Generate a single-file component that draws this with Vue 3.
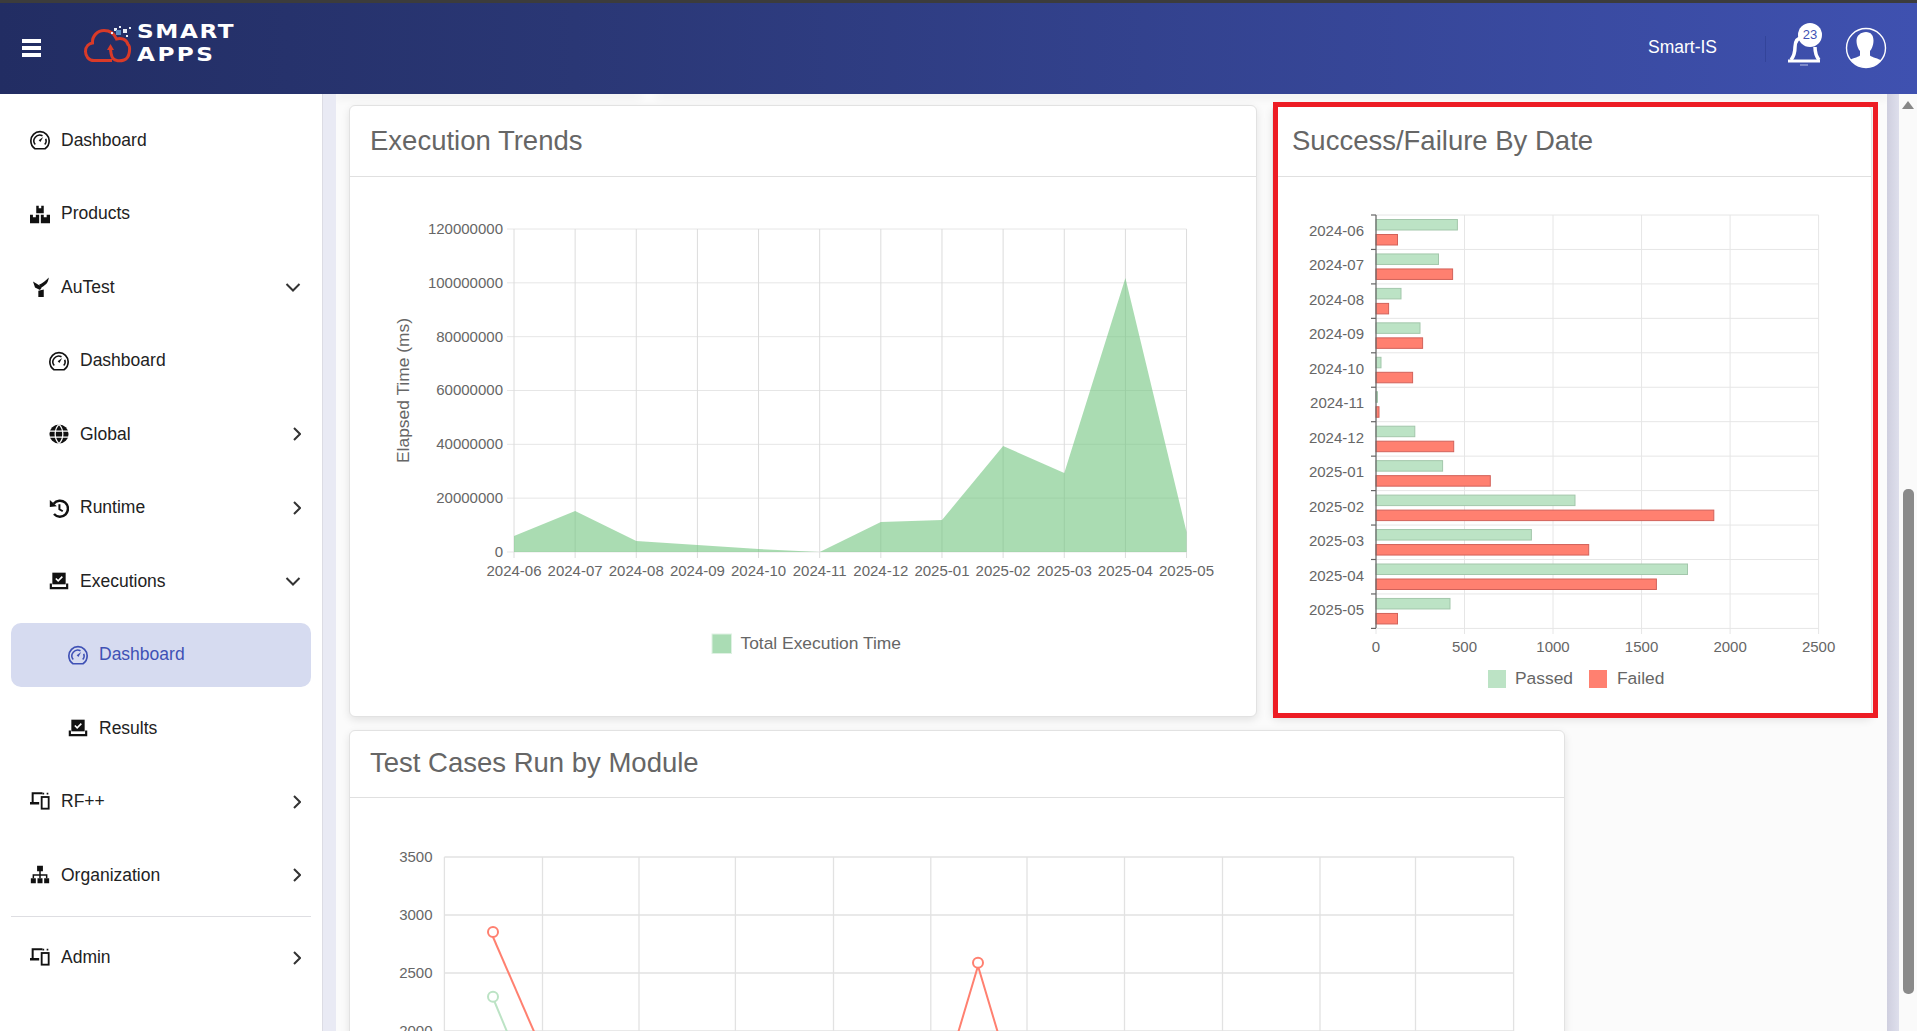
<script setup>
const icons = {
  gauge: '<path d="M6 22.500C2.900 20.500 1 17 1 13a11 11 0 0 1 22 0c0 4-1.900 7.500-5 9.500z" fill="none" stroke="currentColor" stroke-width="2"/><path d="M6.300 17.500a7 7 0 0 1 8.700-10.600M18.900 10.500a7 7 0 0 1-1.200 7" fill="none" stroke="currentColor" stroke-width="1.800"/><path d="M10.400 12.400l5.400-4-3.300 5.900z" fill="currentColor"/>',
  boxes: '<path d="M7.500 2h3v3h3V2h3v9h-9zM0 13h3.500v3h3.500v-3H11v10H0zM13 13h3.500v3H20v-3h4v10H13z" fill="currentColor"/>',
  autest: '<path d="M3.600 5.500L11 10l3 3-2 2.500-6-3zM22.500.5C22 6 20 9 13.500 12.500L10.800 9.200C15 7.500 19 4 22.500.5zM10 16.500l6.500-1.500v9H10z" fill="currentColor"/>',
  globe: '<circle cx="12" cy="12" r="11.500" fill="currentColor"/><path d="M.5 8.400h23M.5 15.600h23M12 .5C8.400 4 7.400 8 7.400 12s1 8 4.600 11.500M12 .5c3.600 3.500 4.600 7.500 4.600 11.500s-1 8-4.600 11.500" fill="none" stroke="#fff" stroke-width="1.500"/>',
  history: '<path d="M5.600 6.800A9.600 9.600 0 1 1 6 19.200" fill="none" stroke="currentColor" stroke-width="3"/><path d="M1 2.400l8.400 7.600-8.400.7z" fill="currentColor"/><path d="M12.500 7.500v6l4 2.400" fill="none" stroke="currentColor" stroke-width="2.400"/>',
  exec: '<path d="M4 2h16v14H4z" fill="currentColor"/><path d="M8.200 9l2.800 2.800 5-5" fill="none" stroke="#fff" stroke-width="2"/><path d="M2.200 15v5.500h19.600V15" fill="none" stroke="currentColor" stroke-width="2.600"/>',
  devices: '<path d="M3.200 12V1.500H15" fill="none" stroke="currentColor" stroke-width="2.400"/><path d="M0 12h11v3H0z" fill="currentColor"/><rect x="14" y="6" width="8.400" height="14" fill="none" stroke="currentColor" stroke-width="2.200"/><path d="M15 1h2v2h-2zM20 1h2v2h-2z" fill="currentColor"/>',
  sitemap: '<path d="M8.500 1h7v6.500h-7zM1 16h6v6H1zM9 16h6v6H9zM17 16h6v6h-6z" fill="currentColor"/><path d="M12 7v9M4 16v-4h16v4" fill="none" stroke="currentColor" stroke-width="1.800"/>',
}

const nav = [
  { label: 'Dashboard', icon: 'gauge', level: 0 },
  { label: 'Products', icon: 'boxes', level: 0 },
  { label: 'AuTest', icon: 'autest', level: 0, arrow: 'down' },
  { label: 'Dashboard', icon: 'gauge', level: 1 },
  { label: 'Global', icon: 'globe', level: 1, arrow: 'right' },
  { label: 'Runtime', icon: 'history', level: 1, arrow: 'right' },
  { label: 'Executions', icon: 'exec', level: 1, arrow: 'down' },
  { label: 'Dashboard', icon: 'gauge', level: 2, active: true },
  { label: 'Results', icon: 'exec', level: 2 },
  { label: 'RF++', icon: 'devices', level: 0, arrow: 'right' },
  { label: 'Organization', icon: 'sitemap', level: 0, arrow: 'right', rule: true },
  { label: 'Admin', icon: 'devices', level: 0, arrow: 'right' },
]

const months = ['2024-06', '2024-07', '2024-08', '2024-09', '2024-10', '2024-11', '2024-12', '2025-01', '2025-02', '2025-03', '2025-04', '2025-05']

// execution trends, everything in page pixels
const trendYs = [536, 511, 541, 545, 549, 552, 522, 520, 446, 473, 278, 532]
const trendX = i => 514 + i * 61.14
const trendTicks = ['120000000', '100000000', '80000000', '60000000', '40000000', '20000000', '0'].map((label, i) => ({ label, y: 229 + i * 53.83 }))
const trendArea = 'M514 552 ' + trendYs.map((y, i) => `L${trendX(i)} ${y}`).join(' ') + ' L' + trendX(11) + ' 552Z'

// success / failure
const passed = [81.4, 62.5, 25, 44, 5, 1.5, 38.8, 66.6, 199, 155.4, 311.5, 74]
const failed = [21.5, 76.6, 12.6, 46.6, 36.6, 3, 77.7, 114.3, 337.8, 212.7, 280.4, 21.5]
const barY = i => 215 + i * 34.45
const barTicks = [0, 500, 1000, 1500, 2000, 2500].map((v, i) => ({ label: v, x: 1376 + i * 88.52 }))

// test cases by module
const moduleX = [444.4, 542.5, 639, 735.4, 833.5, 930.8, 1027, 1124.5, 1222.5, 1320, 1415.5, 1513.6]
const moduleTicks = [3500, 3000, 2500, 2000].map((v, i) => ({ label: v, y: 857 + i * 58 }))
</script>

<template>
  <div class="page">
    <div class="topline"></div>
    <header class="header">
      <div class="burger"><span></span><span></span><span></span></div>
      <div class="logo">
        <svg width="54" height="44" viewBox="82 24 54 44">
          <path d="M96 60.500H94C88.500 60.500 85.500 56 85.500 51.500C85.500 46.500 89 43.500 92.500 43C92 36 97.500 30.500 104 30.500C110 30.500 114.500 34 116.500 39C121 37.500 126.500 39 128 44.500C130.500 46 130.500 58 124 60C120 61.500 115 61 113 58.500C110.500 55 110.500 51 110.500 47M96 60.500H112" fill="none" stroke="#d93a28" stroke-width="3"/>
          <path d="M110.500 44l-3.500 6h7z" fill="#d93a28"/>
          <path d="M114 28h3v3h-3zM119 26h2v2h-2zM123 29h4v4h-4zM129 27h2v2h-2zM111 32h2v2h-2zM126 35h2v2h-2z" fill="#e9edf5"/>
          <path d="M116 30h5v5h-5z" fill="#5c8fc4"/>
        </svg>
        <div class="logo-text"><span>SMART</span><span class="apps">APPS</span></div>
      </div>
      <div class="user">Smart-IS</div>
      <div class="head-rule"></div>
      <div class="bell">
        <svg width="36" height="34" viewBox="0 0 36 34">
          <path d="M5 27c3-4 4-8 4-13 0-6 3-9.500 9-10M33 27c-3-4-4-8-4-13" fill="none" stroke="#fff" stroke-width="3.500"/>
          <path d="M2 26.500h32V29.500H2z" fill="#fff"/>
          <path d="M14 32h8" stroke="#b9c2e8" stroke-width="1"/>
        </svg>
        <span class="badge">23</span>
      </div>
      <svg class="avatar" width="42" height="42" viewBox="0 0 42 42">
        <defs><clipPath id="ava"><circle cx="21" cy="21" r="19.500"/></clipPath></defs>
        <circle cx="21" cy="21" r="19.500" fill="none" stroke="#fff" stroke-width="1.400"/>
        <g clip-path="url(#ava)" fill="#fff">
          <path d="M21 5c5 0 7.500 3.500 7.500 8.500 0 5-2 9-3.500 10.500v4.500c2 2 9 3 11 5l2 8H2l2-8c2-2 9-3 11-5V24c-1.500-1.500-3.500-5.500-3.500-10.500S16 5 21 5z"/>
        </g>
      </svg>
    </header>

    <div class="body">
      <nav class="sidebar">
        <template v-for="(item, i) in nav" :key="i">
          <a class="nav-item" :class="['lvl' + item.level, { active: item.active }]">
            <svg class="nav-icon" viewBox="0 0 24 24" v-html="icons[item.icon]"></svg>
            <span class="nav-label">{{ item.label }}</span>
            <svg v-if="item.arrow" class="chev" viewBox="0 0 16 16">
              <path :d="item.arrow === 'down' ? 'M1.500 5L8 11.500L14.500 5' : 'M9 2L15 8L9 14'" />
            </svg>
          </a>
          <div v-if="item.rule" class="nav-rule"></div>
        </template>
      </nav>
      <div class="gutter left"></div>

      <main class="main">
        <div class="prev-row"><div></div><div></div></div>

        <div class="row">
          <section class="card trends">
            <h2 class="card-title">Execution Trends</h2>
            <svg class="chart" width="906" height="539" viewBox="350 177 906 539">
              <g class="grid">
                <line v-for="t in trendTicks" :key="t.label" x1="507" :x2="trendX(11)" :y1="t.y" :y2="t.y" />
                <line v-for="(m, i) in months" :key="m" class="dark" :x1="trendX(i)" :x2="trendX(i)" y1="229" y2="558" />
              </g>
              <path :d="trendArea" fill="rgb(113,196,127)" fill-opacity="0.6" />
              <text v-for="t in trendTicks" :key="t.label" x="503" :y="t.y + 5" text-anchor="end">{{ t.label }}</text>
              <text v-for="(m, i) in months" :key="m" :x="trendX(i)" y="576" text-anchor="middle">{{ m }}</text>
              <text class="big" transform="translate(409 390.500) rotate(-90)" text-anchor="middle">Elapsed Time (ms)</text>
              <rect x="712" y="634" width="19.500" height="19.500" fill="#aadcb4" stroke="#dff1e3" />
              <text class="big" x="740.500" y="648.500">Total Execution Time</text>
            </svg>
          </section>

          <section class="card success">
            <h2 class="card-title">Success/Failure By Date</h2>
            <svg class="chart" width="598" height="539" viewBox="1273 177 598 539">
              <g class="grid">
                <line v-for="t in barTicks" :key="t.label" :x1="t.x" :x2="t.x" y1="215" y2="634" />
                <line v-for="i in 13" :key="i" x1="1376" x2="1818.600" :y1="barY(i - 1)" :y2="barY(i - 1)" />
              </g>
              <g v-for="(m, i) in months" :key="m">
                <rect x="1376" :y="barY(i) + 4.500" :width="passed[i]" height="10.500" fill="#bce3c5" stroke="#a3c7ab" />
                <rect x="1376" :y="barY(i) + 19.500" :width="failed[i]" height="10.500" fill="#ff8070" stroke="#d2625a" />
                <text x="1364" :y="barY(i) + 21" text-anchor="end">{{ m }}</text>
              </g>
              <line x1="1376" x2="1376" y1="215" y2="628" stroke="#666" stroke-width="1.200" />
              <line v-for="i in 13" :key="'t' + i" x1="1371" x2="1376" :y1="barY(i - 1)" :y2="barY(i - 1)" stroke="#666" stroke-width="1.200" />
              <text v-for="t in barTicks" :key="t.label" :x="t.x" y="652" text-anchor="middle">{{ t.label }}</text>
              <rect x="1488" y="670" width="18" height="18" fill="#bce3c5" />
              <text class="big" x="1515" y="684">Passed</text>
              <rect x="1589" y="670" width="18" height="18" fill="#ff8070" />
              <text class="big" x="1617" y="684">Failed</text>
            </svg>
            <div class="highlight"></div>
          </section>
        </div>

        <section class="card modules">
          <h2 class="card-title">Test Cases Run by Module</h2>
          <svg class="chart" width="1214" height="300" viewBox="350 798 1214 300">
            <g class="grid module-grid">
              <line v-for="t in moduleTicks" :key="t.label" x1="444.400" x2="1513.600" :y1="t.y" :y2="t.y" />
              <line v-for="x in moduleX" :key="x" :x1="x" :x2="x" y1="857" y2="1100" />
            </g>
            <text v-for="t in moduleTicks" :key="t.label" x="432.500" :y="t.y + 5" text-anchor="end">{{ t.label }}</text>
            <g fill="none" stroke-width="2">
              <path d="M493 998L525 1075" stroke="#bce3c5" />
              <circle cx="493" cy="996.700" r="5" stroke="#bce3c5" fill="#fff" />
              <path d="M493 937L555 1080" stroke="#ff8070" />
              <circle cx="493" cy="932" r="5" stroke="#ff8070" fill="#fff" />
              <path d="M944 1080L978 966L1012 1080" stroke="#ff8070" />
              <circle cx="978" cy="962.700" r="5" stroke="#ff8070" fill="#fff" />
            </g>
          </svg>
        </section>
      </main>

      <div class="gutter right"></div>
      <div class="scrollbar">
        <div class="arrow-up"></div>
        <div class="thumb"></div>
      </div>
    </div>
  </div>
</template>

<style scoped>
.page {
  height: 1031px;
  display: flex;
  flex-direction: column;
  overflow: hidden;
  font-family: "Liberation Sans", Arial, sans-serif;
  color: #222;
}

.topline {
  height: 3px;
  background: #3c3c3c;
}

.header {
  height: 91px;
  flex: none;
  display: flex;
  align-items: center;
  padding: 0 30px 0 22px;
  background: linear-gradient(90deg, #222d63 0%, #2a3775 30%, #3f51b0 100%);
  position: relative;
  z-index: 2;
}

.burger {
  width: 19px;
  display: flex;
  flex-direction: column;
  gap: 3.500px;
  margin-bottom: 1px;
}

.burger span {
  height: 3.500px;
  background: #fff;
}

.logo {
  display: flex;
  align-items: center;
  margin-left: 41px;
  margin-bottom: 6px;
  flex: 1;
}

.logo-text {
  display: flex;
  flex-direction: column;
  margin-left: 1px;
  margin-bottom: 6px;
  font-family: "DejaVu Sans", sans-serif;
  font-weight: 700;
  font-size: 19px;
  line-height: 22.500px;
  color: #fff;
  letter-spacing: 1.300px;
  transform: scaleX(1.220);
  transform-origin: left center;
}

.logo-text .apps {
  letter-spacing: 2px;
}

.user {
  font-size: 17.500px;
  color: #fff;
  margin-bottom: 3px;
}

.head-rule {
  width: 1px;
  height: 26px;
  background: #33449a;
  margin: 0 20px 0 48px;
}

.bell {
  position: relative;
  width: 36px;
  height: 34px;
  margin-top: 3px;
}

.badge {
  position: absolute;
  left: 12px;
  top: -10px;
  width: 24px;
  height: 24px;
  border-radius: 50%;
  background: #fff;
  color: #3f51b5;
  font-size: 13px;
  line-height: 24px;
  text-align: center;
}

.avatar {
  margin-left: 23px;
  margin-bottom: 2px;
}

.body {
  flex: 1;
  min-height: 0;
  display: flex;
}

.sidebar {
  width: 323px;
  flex: none;
  box-sizing: border-box;
  display: flex;
  flex-direction: column;
  padding: 9.500px 11px 0;
  background: #fff;
  border-right: 1px solid #dcdce4;
}

.nav-item {
  height: 63.500px;
  flex: none;
  margin: 5px 0;
  display: flex;
  align-items: center;
  border-radius: 10px;
  font-size: 17.500px;
  padding-right: 10px;
}

.lvl0 { padding-left: 19px; }
.lvl1 { padding-left: 38px; }
.lvl2 { padding-left: 57px; }

.nav-icon {
  width: 20px;
  height: 20px;
  flex: none;
  margin-right: 11px;
  color: #111;
}

.nav-label {
  flex: 1;
}

.chev {
  width: 16px;
  height: 16px;
  flex: none;
  fill: none;
  stroke: #333;
  stroke-width: 2;
}

.active {
  background: #d6dbf0;
  color: #3f51b5;
}

.active .nav-icon {
  color: #3f51b5;
}

.nav-rule {
  height: 1px;
  flex: none;
  background: #dedee2;
  margin: 3.500px 0 4.500px;
}

.gutter {
  width: 13px;
  flex: none;
  background: #e9eaf4;
}

.gutter.right {
  width: 12px;
  background: linear-gradient(90deg, #cfcfdf, #dedfec);
}

.main {
  flex: 1;
  min-width: 0;
  padding: 0 9px 0 13px;
  background: #fbfbfb;
  overflow: hidden;
}

.prev-row {
  display: flex;
  height: 0;
  gap: 18px;
  margin: 0 -9px 11px -13px;
}

.prev-row div {
  height: 0;
  box-shadow: 0 2px 8px 2px rgba(0, 0, 0, 0.07);
}

.prev-row div:first-child {
  width: 304px;
}

.prev-row div:last-child {
  flex: 1;
}

.row {
  display: flex;
  gap: 15px;
  margin-bottom: 13px;
}

.card {
  box-sizing: border-box;
  background: #fff;
  border: 1px solid #e2e2e2;
  border-radius: 6px;
  box-shadow: 0 3px 8px rgba(0, 0, 0, 0.1);
  flex: none;
}

.trends {
  width: 908px;
}

.success {
  width: 600px;
  position: relative;
}

.success .card-title {
  padding-left: 19px;
}

.modules {
  width: 1216px;
}

.card-title {
  margin: 0;
  padding: 0 20px;
  height: 70px;
  line-height: 69px;
  font-size: 27.500px;
  font-weight: 400;
  color: #666;
  border-bottom: 1px solid #e0e0e0;
}

.modules .card-title {
  height: 66px;
  line-height: 63px;
}

.chart {
  display: block;
}

.chart text {
  font-family: "Liberation Sans", Arial, sans-serif;
  font-size: 15px;
  fill: #666;
}

.chart text.big {
  font-size: 17.400px;
}

.grid line {
  stroke: #e6e6e6;
  stroke-width: 1;
}

.grid line.dark {
  stroke: #dcdcdc;
}

.module-grid line {
  stroke: #e2e2e2;
  stroke-width: 1.300;
}

.highlight {
  position: absolute;
  top: -4px;
  bottom: -2px;
  left: 0;
  right: -7px;
  border: 5px solid #ed1c24;
  pointer-events: none;
}

.scrollbar {
  width: 18px;
  flex: none;
  background: #fafafa;
  display: flex;
  flex-direction: column;
  align-items: center;
}

.arrow-up {
  margin-top: 7px;
  width: 0;
  height: 0;
  border-left: 6.500px solid transparent;
  border-right: 6.500px solid transparent;
  border-bottom: 8px solid #888;
}

.thumb {
  margin-top: 380px;
  width: 11px;
  height: 505px;
  border-radius: 5px;
  background: #8a8a8a;
}
</style>

<style>
html,
body {
  overflow: hidden;
}
</style>
